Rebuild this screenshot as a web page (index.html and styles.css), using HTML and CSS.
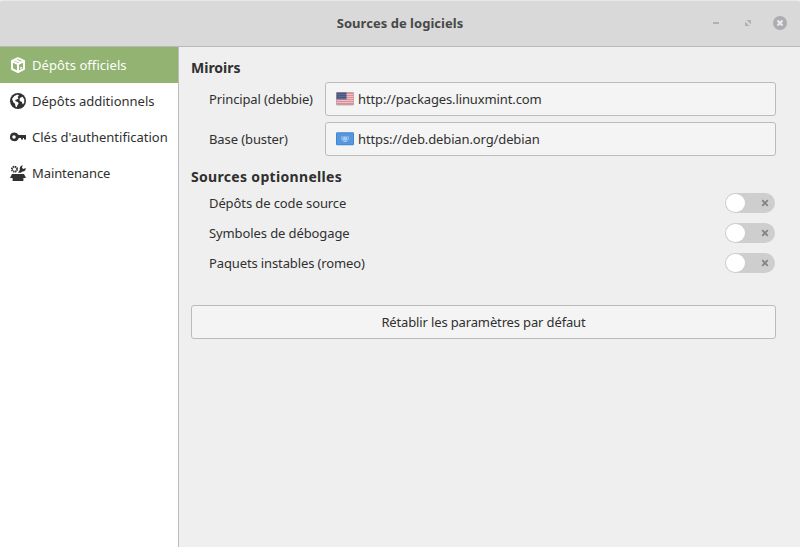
FILE: index.html
```html
<!DOCTYPE html>
<html lang="fr">
<head>
<meta charset="utf-8">
<title>Sources de logiciels</title>
<link rel="stylesheet" href="styles.css">
</head>
<body>
<div class="window">
  <header class="titlebar">
    <h1 class="title">Sources de logiciels</h1>
    <div class="controls">
      <svg width="14" height="14" viewBox="0 0 14 14"><path d="M4 6h6v2H4z" fill="#b0b1b5"/></svg>
      <svg width="14" height="14" viewBox="0 0 14 14"><path d="M5.5 4H10v4.5zM4 5.5V10h4.5z" fill="#b0b1b5"/></svg>
      <svg width="14" height="14" viewBox="0 0 14 14"><circle cx="7" cy="7" r="7" fill="#acadb2"/><path d="M4.5 4.5l5 5M9.5 4.5l-5 5" stroke="#e9e9e9" stroke-width="2.2"/></svg>
    </div>
  </header>
  <div class="body">
    <nav class="sidebar">
      <a class="item active">
        <svg width="16" height="16" viewBox="0 0 16 16" fill="none" stroke="currentColor" stroke-width="2" stroke-linejoin="round"><path d="M8 1.2L14 3.9V12L8 15 2 12V3.9zM2 4.2L8 7.2l6-3M8 7v8M5 2.8L11 5.6"/><path d="M10 11.4l2-1" stroke-width="1.4"/></svg>
        <span class="officiels">Dépôts officiels</span>
      </a>
      <a class="item">
        <svg width="16" height="16" viewBox="0 0 16 16"><circle cx="8" cy="8" r="8" fill="currentColor"/><path d="M2 6L4.3 3 7.6 1.6 9 2.5 7.5 4.1 8.7 5.2 6.7 6.6 5.2 7.1 5.6 8.3 7.7 9 8.7 10.6 7.4 12.3 6.8 14.3 5.5 13.5 5 10.8 3.3 9.2zM10.2 4.7L12.6 3.7 14.3 6.6 14.2 9.8 12.8 11.4 11.7 8.8 9.8 8.1 9.4 6.2z" fill="#fff"/></svg>
        <span>Dépôts additionnels</span>
      </a>
      <a class="item">
        <svg width="16" height="16" viewBox="0 0 16 16"><path fill="currentColor" fill-rule="evenodd" d="M4.5 3.5A4.5 4.5 0 0 1 8.6 6H16v4.6h-2V9h-1v1.6h-2V9H8.8A4.5 4.3 0 1 1 4.5 3.5zM4 6.2a1.8 1.8 0 1 0 0 3.6 1.8 1.8 0 0 0 0-3.6z"/></svg>
        <span>Clés d'authentification</span>
      </a>
      <a class="item">
        <svg width="16" height="16" viewBox="0 0 16 16"><circle cx="4.5" cy="4.2" r="2.8" fill="none" stroke="currentColor" stroke-width="1.5" stroke-dasharray="1.4 .8"/><circle cx="4.5" cy="4.2" r="2.1" fill="none" stroke="currentColor" stroke-width=".7"/><path fill="currentColor" d="M12.8.3L11.9 2.7 13.2 4 15.7 2.9C16 5.2 14.3 6.8 12.3 6.4L10.8 7.8H8L9.8 4.9C9.3 2.6 10.5.7 12.8.3zM2 9h12l2 4h-2.6v3H2.6v-3H0z"/></svg>
        <span class="maintenance">Maintenance</span>
      </a>
    </nav>
    <main class="content">
      <h2 class="heading">Miroirs</h2>
      <div class="mirrors">
        <span class="principal">Principal (debbie)</span>
        <button class="field">
          <svg width="18" height="14" viewBox="0 0 18 14"><rect width="18" height="13.5" rx="1.2" fill="#b9b6bb"/><rect x=".5" y=".5" width="17" height="12.2" rx=".7" fill="#dc8f96"/><path d="M1 2.5h16M1 4.5h16M1 6.5h16M1 8.5h16M1 10.5h16" stroke="#e7cdd1" stroke-width=".8"/><rect x=".5" y=".5" width="10" height="6.8" fill="#475785"/><path d="M1.5 2.5h8.5M2.5 4.5h7M1.5 6.5h8.5" stroke="#73809f" stroke-dasharray="1 1"/></svg>
          <span class="http">http://packages.linuxmint.com</span>
        </button>
        <span class="base">Base (buster)</span>
        <button class="field">
          <svg width="18" height="14" viewBox="0 0 18 14"><rect y=".3" width="18" height="13" rx="1.2" fill="#3f86d3"/><rect x="1" y="1.3" width="16" height="11" fill="#5797df"/><circle cx="9" cy="6.5" r="2.3" fill="#a5c9ef"/><path d="M6.4 4C4.8 6.2 6.2 9.2 9 9.7c2.8-.5 4.2-3.5 2.6-5.7" fill="none" stroke="#b4d2f2" stroke-width=".9"/></svg>
          <span class="https">https://deb.debian.org/debian</span>
        </button>
      </div>
      <h2 class="heading second">Sources optionnelles</h2>
      <div class="option"><span class="code">Dépôts de code source</span><span class="switch"><svg width="8" height="8" viewBox="0 0 8 8"><path d="M1.2 1.2l5.6 5.6M6.8 1.2L1.2 6.8"/></svg></span></div>
      <div class="option"><span class="symboles">Symboles de débogage</span><span class="switch"><svg width="8" height="8" viewBox="0 0 8 8"><path d="M1.2 1.2l5.6 5.6M6.8 1.2L1.2 6.8"/></svg></span></div>
      <div class="option"><span class="paquets">Paquets instables (romeo)</span><span class="switch"><svg width="8" height="8" viewBox="0 0 8 8"><path d="M1.2 1.2l5.6 5.6M6.8 1.2L1.2 6.8"/></svg></span></div>
      <button class="reset">Rétablir les paramètres par défaut</button>
    </main>
  </div>
</div>
</body>
</html>
```
FILE: styles.css
```css
* { box-sizing: border-box; }
body { margin: 0; background: #efefef; color: #303030; font: 13px/18px "Noto Sans", sans-serif; overflow: hidden; }
h1, h2 { margin: 0; font-weight: 700; white-space: nowrap; }
button { font: inherit; color: inherit; background: #f4f4f4; border: 1px solid #bbb; border-radius: 3px; padding: 0; }
svg { display: block; flex: none; }
span { white-space: nowrap; }
.window { height: 547px; display: flex; flex-direction: column; }
.titlebar { height: 47px; flex: none; display: grid; grid-template-columns: 1fr auto 1fr; align-items: center; background: #d9d9d9; border-top: 1px solid #e9e9e9; border-bottom: 1px solid #b9b9b9; border-radius: 3px 3px 0 0; padding-bottom: 2px; }
.title { grid-column: 2; font-size: 13px; line-height: 18px; color: #484848; letter-spacing: .03px; }
.controls { display: flex; justify-content: flex-end; gap: 18px; padding-right: 13px; }
.body { flex: 1; display: flex; min-height: 0; }
.sidebar { width: 179px; flex: none; background: #fff; border-right: 1px solid #bbb; }
.item { height: 36px; display: flex; align-items: center; gap: 6px; padding-left: 10px; }
.active { background: #92b372; color: #fff; }
.officiels { letter-spacing: .06px; }
.maintenance { letter-spacing: -.1px; }
.content { flex: 1; padding: 12px 24px 0 12px; }
.heading { font-size: 14px; line-height: 18px; height: 23px; }
.mirrors { display: grid; grid-template-columns: 116px 1fr; grid-auto-rows: 34px; row-gap: 6px; align-items: center; padding-left: 18px; }
.field { height: 34px; display: flex; align-items: center; gap: 4.5px; padding-left: 9.5px; text-align: left; }
.principal { letter-spacing: -.12px; }
.base { letter-spacing: -.1px; }
.http, .https { letter-spacing: -.12px; }
.second { margin-top: 12px; height: 20px; letter-spacing: .32px; }
.option { height: 30px; padding: 0 1px 0 18px; display: flex; align-items: center; justify-content: space-between; }
.code, .symboles { letter-spacing: -.1px; }
.paquets { letter-spacing: -.12px; }
.switch { width: 50px; height: 20px; border-radius: 10px; background: #cecece; display: flex; align-items: center; justify-content: space-between; padding: 0 6px 0 1px; }
.switch::before { content: ""; width: 18.5px; height: 18.5px; border-radius: 50%; background: #fff; }
.switch path { stroke: #838383; stroke-width: 1.7; }
.reset { display: block; width: 100%; height: 34px; margin-top: 27px; letter-spacing: -.14px; }
```
